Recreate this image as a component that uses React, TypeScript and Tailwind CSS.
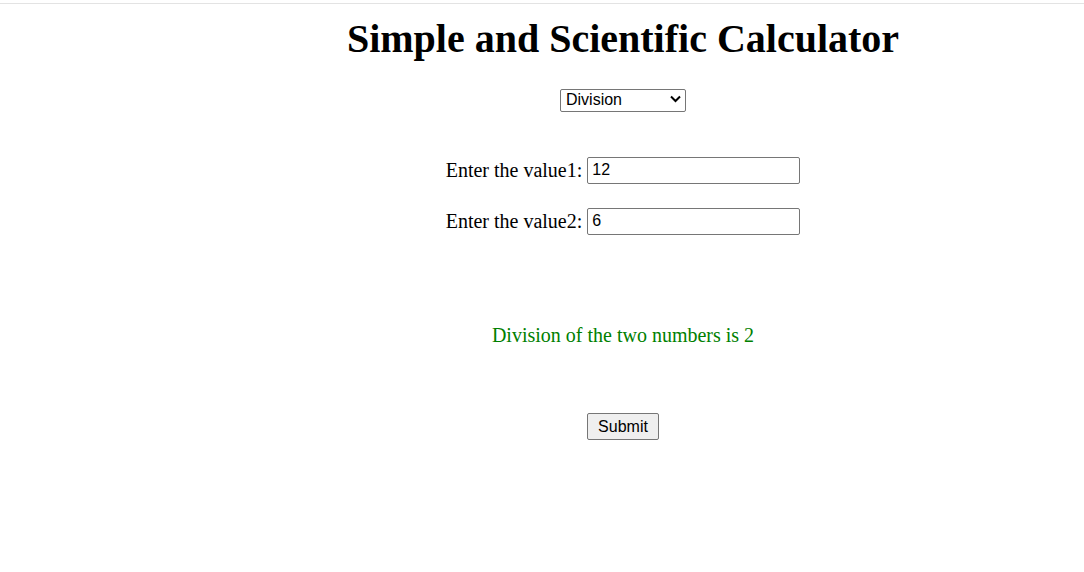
import React from 'react';

const App: React.FC = () => {
  const [op, setOp] = React.useState('Division');
  const [value1, setValue1] = React.useState('12');
  const [value2, setValue2] = React.useState('6');

  return (
    <div className="min-h-screen bg-white font-['Liberation_Serif',serif] text-black">
      <div className="h-[3px]" />
      <div className="border-t border-[#e3e3e3]" />

      <div className="pl-[162px] flex flex-col items-center">
        <h1 className="mt-[12px] text-[40px] leading-[46px] font-bold">Simple and Scientific Calculator</h1>

        <div className="relative mt-[26px] w-[126px] h-[23px]">
          <select
            value={op}
            onChange={(e) => setOp(e.target.value)}
            className="appearance-none w-full h-full border border-[#767676] rounded-[2px] bg-white pl-[5px] font-['Liberation_Sans',sans-serif] text-[16px] leading-[20px]"
          >
            <option>Addition</option>
            <option>Subtraction</option>
            <option>Multiplication</option>
            <option>Division</option>
          </select>
          <svg className="pointer-events-none absolute right-[5px] top-[7px]" width="11" height="8" viewBox="0 0 11 8" fill="none">
            <path d="M1 1.5 L5.5 6 L10 1.5" stroke="#000" strokeWidth="2" />
          </svg>
        </div>

        <div className="mt-[44px] flex items-center gap-[5px] text-[20px]">
          <span>Enter the value1:</span>
          <input
            value={value1}
            onChange={(e) => setValue1(e.target.value)}
            className="w-[213px] h-[27px] border border-[#767676] rounded-[2px] px-[4px] font-['Liberation_Sans',sans-serif] text-[16px]"
          />
        </div>

        <div className="mt-[21px] flex items-center gap-[5px] text-[20px]">
          <span>Enter the value2:</span>
          <input
            value={value2}
            onChange={(e) => setValue2(e.target.value)}
            className="w-[213px] h-[27px] border border-[#767676] rounded-[2px] px-[4px] font-['Liberation_Sans',sans-serif] text-[16px]"
          />
        </div>

        <p className="mt-[87px] text-[20px] leading-[24px] text-[#008000]">Division of the two numbers is 2</p>

        <button
          type="button"
          className="mt-[66px] w-[72px] h-[27px] bg-[#efefef] border border-[#767676] rounded-[2px] font-['Liberation_Sans',sans-serif] text-[16px]"
        >
          Submit
        </button>
      </div>
    </div>
  );
};

export default App;
